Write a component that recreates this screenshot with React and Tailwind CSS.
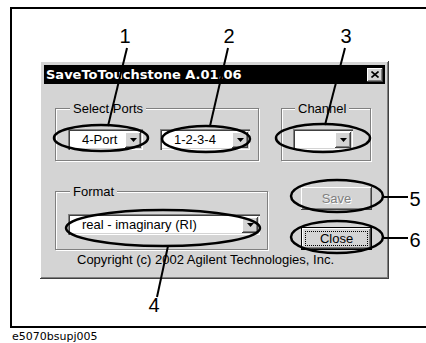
const raised =
  'shadow-[inset_-1px_-1px_0_#404040,inset_1px_1px_0_#ffffff,inset_-2px_-2px_0_#808080,inset_2px_2px_0_#d4d4d4]';
const sunken =
  'shadow-[inset_1px_1px_0_#808080,inset_2px_2px_0_#404040,inset_-1px_-1px_0_#ffffff,inset_-2px_-2px_0_#d4d4d4]';

function DropButton() {
  return (
    <div className={`w-[16px] h-[16px] bg-[#d4d4d4] flex items-center justify-center ${raised}`}>
      <svg width="7" height="4" viewBox="0 0 7 4" aria-hidden="true">
        <path d="M0 0h7L3.5 4z" fill="#000" />
      </svg>
    </div>
  );
}

function Combo({ width, text }) {
  return (
    <div className={`${width} h-[21px] bg-white flex items-center justify-between p-[2px] ${sunken}`}>
      <span className="pl-[12px] text-[13px] leading-none">{text}</span>
      <DropButton />
    </div>
  );
}

function Group({ label, className, children }) {
  return (
    <fieldset
      className={`border border-[#808080] shadow-[inset_1px_1px_0_#ffffff,1px_1px_0_#ffffff] ${className}`}
    >
      <legend className="ml-[2px] px-[3px] bg-[#d4d4d4] text-[13px] leading-[15px]">{label}</legend>
      {children}
    </fieldset>
  );
}

export default function App() {
  const ellipses = [
    { cx: 101, cy: 138, rx: 47, ry: 13 },
    { cx: 206, cy: 139, rx: 44, ry: 13 },
    { cx: 323, cy: 138, rx: 47, ry: 14 },
    { cx: 163, cy: 228, rx: 97, ry: 18 },
    { cx: 337, cy: 196, rx: 46, ry: 16 },
    { cx: 337, cy: 237, rx: 46, ry: 16 },
  ];
  const leaders = [
    [127, 48, 108, 126],
    [228, 48, 210, 126],
    [345, 48, 325, 125],
    [168, 246, 157, 297],
    [383, 197, 408, 197],
    [383, 238, 408, 238],
  ];
  const numbers = [
    { n: '1', x: 125, y: 43 },
    { n: '2', x: 229, y: 43 },
    { n: '3', x: 346, y: 43 },
    { n: '4', x: 154, y: 312 },
    { n: '5', x: 415, y: 206 },
    { n: '6', x: 415, y: 247 },
  ];

  return (
    <div className="relative w-[426px] h-[343px] bg-white overflow-hidden text-black font-['Liberation_Sans',Arial,sans-serif]">
      <div className="ml-[10px] mt-[7px] h-[321px] border-2 border-r-0 border-black pt-[52px] pl-[28px]">
        {/* dialog */}
        <div className={`w-[349px] h-[218px] bg-[#d4d4d4] p-[4px] ${raised}`}>
          <div className="h-[19px] bg-black flex items-center justify-between pl-[2px] pr-[2px]">
            <span className="text-white font-bold text-[13px] leading-none font-['DejaVu_Sans',sans-serif]">
              SaveToTouchstone A.01.06
            </span>
            <div className={`w-[16px] h-[14px] bg-[#d4d4d4] flex items-center justify-center ${raised}`}>
              <svg width="8" height="7" viewBox="0 0 8 7" aria-hidden="true">
                <path d="M0.5 0.5L7.5 6.5M7.5 0.5L0.5 6.5" stroke="#000" strokeWidth="1.6" />
              </svg>
            </div>
          </div>

          <div className="px-[11px]">
            <div className="mt-[17px] flex gap-[22px]">
              <Group label="Select Ports" className="w-[204px] h-[60px] pl-[12px] pt-[13px]">
                <div className="flex gap-[17px]">
                  <Combo width="w-[75px]" text="4-Port" />
                  <Combo width="w-[90px]" text="1-2-3-4" />
                </div>
              </Group>
              <Group label="Channel" className="w-[90px] h-[60px] pl-[11px] pt-[13px]">
                <Combo width="w-[60px]" text="" />
              </Group>
            </div>

            <div className="mt-[23px] flex">
              <Group label="Format" className="w-[213px] h-[66px] pl-[12px] pt-[15px]">
                <Combo width="w-[192px]" text="real - imaginary (RI)" />
              </Group>
              <div className="ml-[33px] mt-[3px] flex flex-col gap-[17px]">
                <div className={`w-[71px] h-[23px] flex items-center justify-center text-[13px] text-[#808080] [text-shadow:1px_1px_0_#ffffff] ${raised}`}>
                  Save
                </div>
                <div className="w-[71px] h-[23px] border border-black">
                  <div className={`w-full h-full p-[3px] ${raised}`}>
                    <div className="w-full h-full border border-dotted border-black flex items-center justify-center text-[13px] leading-none">
                      Close
                    </div>
                  </div>
                </div>
              </div>
            </div>

            <div className="mt-[2px] pl-[22px] text-[13px] leading-[15px]">
              Copyright (c) 2002 Agilent Technologies, Inc.
            </div>
          </div>
        </div>
      </div>
      <div className="ml-[12px] mt-[3px] text-[11px] leading-none font-['DejaVu_Sans',sans-serif]">e5070bsupj005</div>

      {/* callout annotations */}
      <svg className="absolute left-0 top-0" width="426" height="343" viewBox="0 0 426 343">
        {ellipses.map((e, i) => (
          <ellipse key={i} cx={e.cx} cy={e.cy} rx={e.rx} ry={e.ry} fill="none" stroke="#000" strokeWidth="2.5" />
        ))}
        {leaders.map(([x1, y1, x2, y2], i) => (
          <line key={i} x1={x1} y1={y1} x2={x2} y2={y2} stroke="#000" strokeWidth="2" />
        ))}
        {numbers.map((t) => (
          <text
            key={t.n}
            x={t.x}
            y={t.y}
            textAnchor="middle"
            fontSize="20"
            fontFamily="Liberation Sans, Arial, sans-serif"
            fill="#000"
          >
            {t.n}
          </text>
        ))}
      </svg>
    </div>
  );
}
